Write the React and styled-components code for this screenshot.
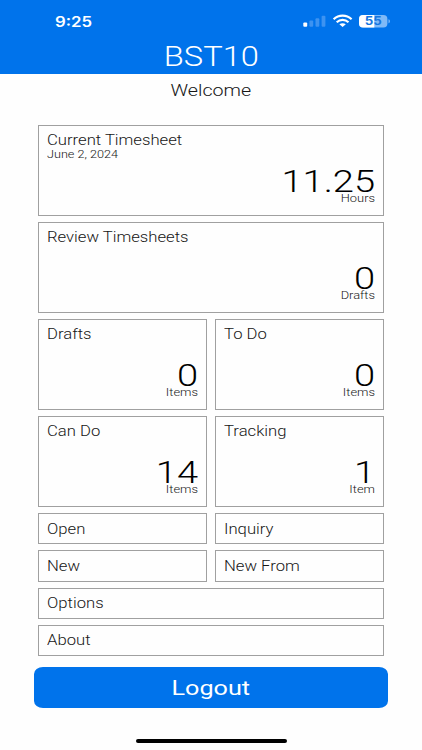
import React from 'react'
import styled, { createGlobalStyle } from 'styled-components';

const tiles = [
    { title: 'Current Timesheet', subtitle: 'June 2, 2024', value: '11.25', unit: 'Hours', wide: true },
    { title: 'Review Timesheets', value: '0', unit: 'Drafts', wide: true },
    { title: 'Drafts', value: '0', unit: 'Items' },
    { title: 'To Do', value: '0', unit: 'Items' },
    { title: 'Can Do', value: '14', unit: 'Items' },
    { title: 'Tracking', value: '1', unit: 'Item' },
];

const links = [
    { title: 'Open' },
    { title: 'Inquiry' },
    { title: 'New' },
    { title: 'New From' },
    { title: 'Options', wide: true },
    { title: 'About', wide: true },
];

function StatusIcons() {
    return (
        <svg width="88" height="16" viewBox="0 0 88 16">
            <rect x="1.3" y="9.6" width="3.9" height="4.2" rx="1" fill="#fff" />
            <g fill="#3d93f1">
                <rect x="7.4" y="7.6" width="3.8" height="6.2" rx="1" />
                <rect x="13.5" y="5.3" width="3.8" height="8.5" rx="1" />
                <rect x="19.6" y="2.8" width="3.8" height="11" rx="1" />
            </g>

            <g fill="none" stroke="#fff" strokeWidth="2.2">
                <path d="M31.6 6.2C36.8 1.5 44.4 1.5 49.6 6.2" />
                <path d="M34.7 9.2C38.1 6.2 43.1 6.2 46.5 9.2" />
            </g>
            <path d="M37.4 11.3C39.3 9.8 41.9 9.8 43.8 11.3L40.6 14Z" fill="#fff" />

            <rect x="57" y="2" width="28.4" height="12.4" rx="4" fill="#7fb9f7" />
            <path d="M61 2H72.3V14.4H61A4 4 0 0 1 57 10.4V6A4 4 0 0 1 61 2Z" fill="#fff" />
            <path d="M86.5 6.2C88.4 6.8 88.4 9.6 86.5 10.2Z" fill="#7fb9f7" />
            <text
                x="71.2"
                y="12.4"
                textAnchor="middle"
                textLength="17"
                lengthAdjust="spacingAndGlyphs"
                fontFamily="Inter, sans-serif"
                fontSize="11.5"
                fontWeight="700"
                fill="#1576e0"
            >
                55
            </text>
        </svg>
    );
}

export default function App() {
    return (
        <Screen>
            <GlobalStyle />

            <Header>
                <StatusBar>
                    <Time>9:25</Time>
                    <StatusIcons />
                </StatusBar>
                <Title>BST10</Title>
            </Header>

            <Welcome>Welcome</Welcome>

            <Grid>
                {tiles.map((tile) => (
                    <Tile key={tile.title} $wide={tile.wide}>
                        <TileTitle>{tile.title}</TileTitle>
                        {tile.subtitle && <TileSubtitle>{tile.subtitle}</TileSubtitle>}
                        <TileValue>{tile.value}</TileValue>
                        <TileUnit>{tile.unit}</TileUnit>
                    </Tile>
                ))}
                {links.map((link) => (
                    <LinkTile key={link.title} $wide={link.wide}>
                        <TileTitle>{link.title}</TileTitle>
                    </LinkTile>
                ))}
            </Grid>

            <LogoutButton>
                <LogoutLabel>Logout</LogoutLabel>
            </LogoutButton>

            <HomeIndicator />
        </Screen>
    );
}

const GlobalStyle = createGlobalStyle`
    * {
        box-sizing: border-box;
    }

    body {
        margin: 0;
        background-color: #fff;
        font-family: Roboto, sans-serif;
        font-weight: 300;
    }
`;

const Screen = styled.div`
    width: 422px;
    height: 750px;
    overflow: hidden;
    display: flex;
    flex-direction: column;
    align-items: center;
    background-color: #fefefe;
    color: #161616;
`;

const Header = styled.header`
    width: 100%;
    height: 74px;
    display: flex;
    flex-direction: column;
    align-items: center;
    background-color: #0073eb;
    color: #fff;
`;

const StatusBar = styled.div`
    width: 100%;
    height: 41px;
    padding: 12.5px 32px 0 54.5px;
    display: flex;
    justify-content: space-between;
    align-items: flex-start;
`;

const Stretched = styled.span`
    display: block;
    white-space: nowrap;
    transform: scaleX(${({ $stretch }) => $stretch || 1.19});
`;

const Time = styled(Stretched).attrs({ $stretch: 1.16 })`
    font-family: Inter, sans-serif;
    font-size: 14.5px;
    font-weight: 600;
    line-height: 18px;
    transform-origin: left;
`;

const Title = styled(Stretched).attrs({ $stretch: 1.21 })`
    font-size: 27px;
    line-height: 32px;
`;

const Welcome = styled(Stretched)`
    height: 51px;
    padding-top: 1px;
    font-size: 16.5px;
    line-height: 32px;
`;

const Grid = styled.main`
    width: 346px;
    display: grid;
    grid-template-columns: 1fr 1fr;
    gap: 6px 8px;
`;

const Tile = styled.section`
    height: 91px;
    padding: 5px 8px 11px;
    display: flex;
    flex-direction: column;
    grid-column: ${({ $wide }) => ($wide ? 'span 2' : 'auto')};
    border: 1px solid #a0a0a0;
`;

const LinkTile = styled(Tile)`
    height: 31.25px;
    padding-top: 5.5px;
    padding-bottom: 0;
`;

const TileTitle = styled(Stretched)`
    font-size: 14px;
    line-height: 19px;
    transform-origin: left;
`;

const TileSubtitle = styled(Stretched).attrs({ $stretch: 1.15 })`
    font-size: 11px;
    line-height: 10px;
    transform-origin: left;
`;

const TileValue = styled(Stretched)`
    margin-top: auto;
    font-size: 32px;
    line-height: 24px;
    text-align: right;
    transform-origin: right;
    color: #000;
`;

const TileUnit = styled(Stretched).attrs({ $stretch: 1.17 })`
    font-size: 11px;
    line-height: 11px;
    text-align: right;
    transform-origin: right;
`;

const LogoutButton = styled.button`
    width: 354px;
    height: 41px;
    margin-top: 11px;
    padding: 0;
    display: flex;
    justify-content: center;
    align-items: center;
    border: none;
    border-radius: 9px / 7px;
    background-color: #0073eb;
    color: #fff;
    font-family: inherit;
`;

const LogoutLabel = styled(Stretched).attrs({ $stretch: 1.2 })`
    font-size: 21px;
    font-weight: 400;
    line-height: 24px;
`;

const HomeIndicator = styled.div`
    width: 151px;
    height: 4px;
    margin-top: 31px;
    border-radius: 2px;
    background-color: #000;
`;
